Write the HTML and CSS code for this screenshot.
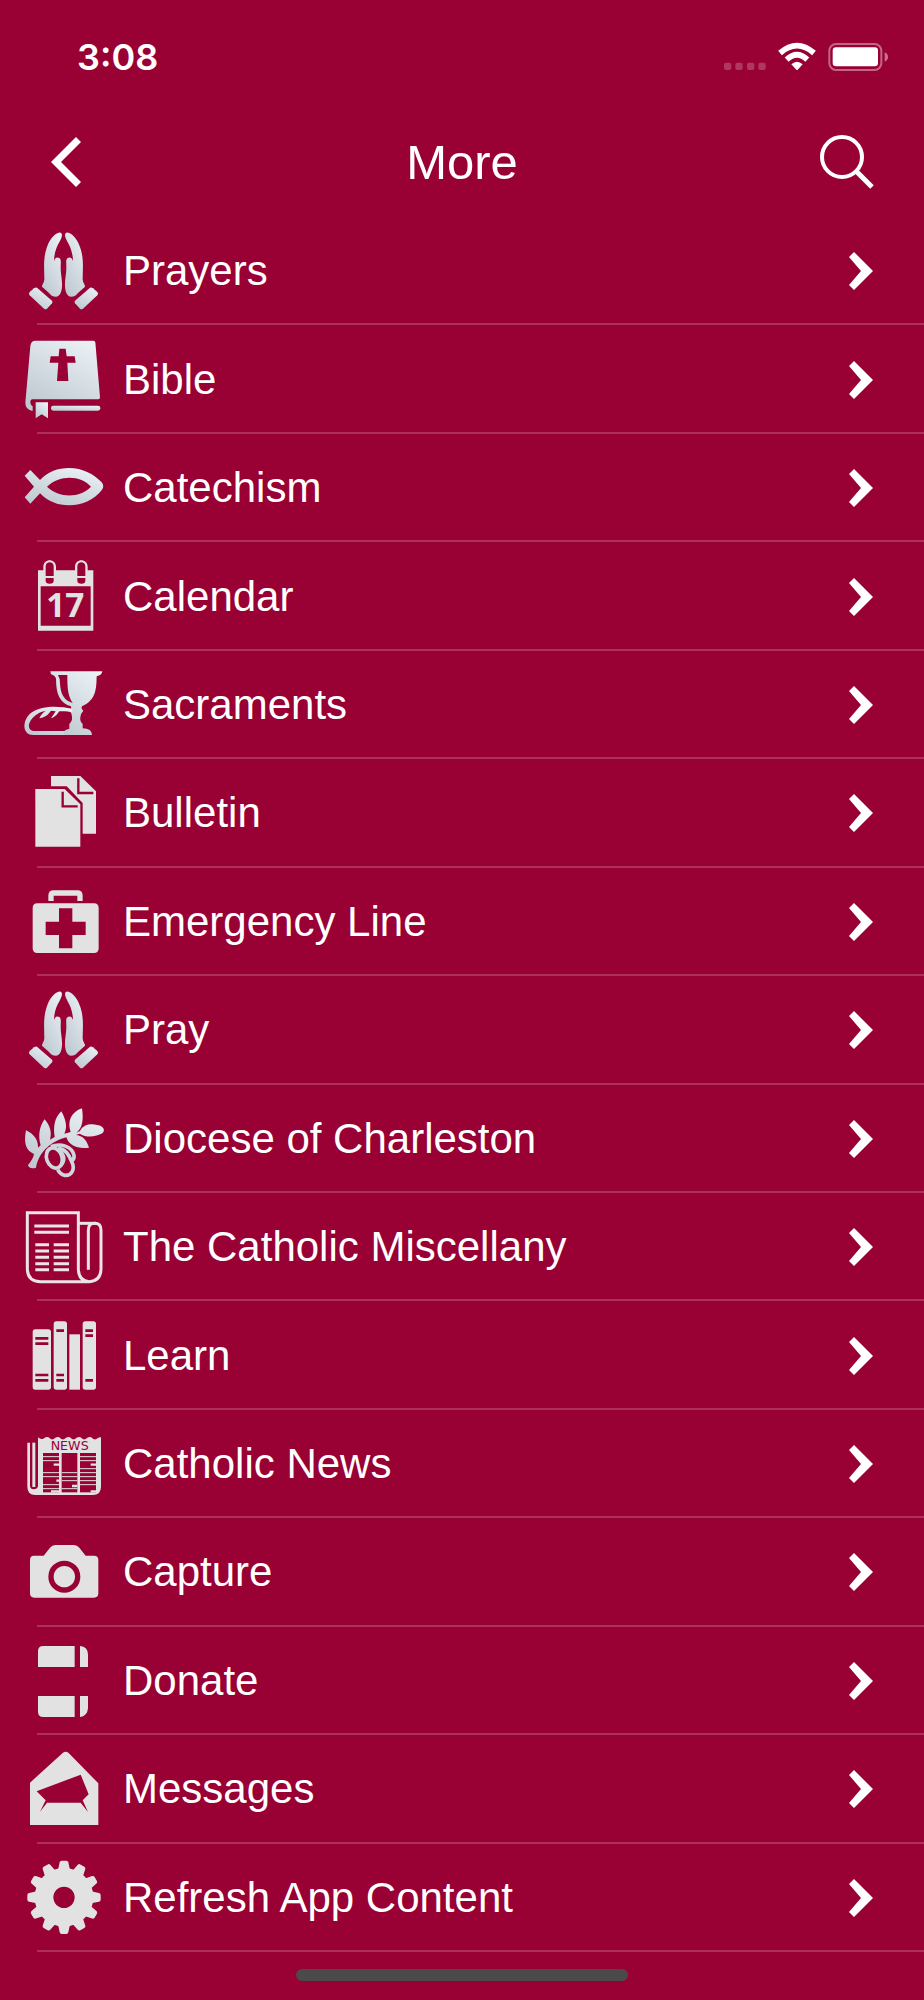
FILE: index.html
```html
<!DOCTYPE html>
<html lang="en">
<head>
    <meta charset="UTF-8">
    <meta name="viewport" content="width=device-width, initial-scale=1.0">
    <title>More</title>
    <link rel="stylesheet" href="styles.css">
</head>
<body>

    <!-- shared shapes -->
    <svg class="defs" aria-hidden="true">
        <defs>
            <linearGradient id="silver" x1="0.8" y1="0" x2="0.2" y2="1">
                <stop offset="0" stop-color="#e9f1f5"/>
                <stop offset="1" stop-color="#bfc8d0"/>
            </linearGradient>
            <symbol id="chevron" viewBox="0 0 26 38">
                <path d="M5 0L24 19L5 38L0 33L12 19L0 5Z" fill="#fff"/>
            </symbol>
            <symbol id="praying" viewBox="66 25 252 252">
                <g fill="url(#silver)">
                    <path d="M176 39C186 37 188 46 184 55C180 68 163 85 162 124C166 112 172 111 179 116C184 121 182 130 182 145C182 165 187 180 186 200C185 220 178 231 168 231C158 231 152 227 147 220L126 201C125 195 133 190 133 178C133 150 129 120 139 88C146 64 160 43 176 39Z"/>
                    <path d="M205 39C195 37 193 46 197 55C201 68 218 85 219 124C215 112 209 111 202 116C197 121 199 130 199 145C199 165 194 180 195 200C196 220 203 231 213 231C223 231 229 227 234 220L255 201C256 195 248 190 248 178C248 150 252 120 242 88C235 64 221 43 205 39Z"/>
                    <path d="M111 204L156 243Q159 247 156 251L141 267Q137 271 132 267L89 227Q84 222 89 217L102 206Q107 202 111 204Z"/>
                    <path d="M270 204L225 243Q222 247 225 251L240 267Q244 271 249 267L292 227Q297 222 292 217L279 206Q274 202 270 204Z"/>
                </g>
            </symbol>
            <path id="tooth" d="M174 390L179 366Q180 361 185 361H199Q204 361 205 366L210 390Z"/>
        </defs>
    </svg>

    <div class="status-bar">
        <span class="time">3:08</span>
        <svg class="indicators" viewBox="98 66 504 90" aria-hidden="true">
            <g fill="#fff" fill-opacity=".22">
                <rect x="101" y="128" width="22" height="22" rx="6"/>
                <rect x="135" y="128" width="22" height="22" rx="6"/>
                <rect x="170" y="128" width="22" height="22" rx="6"/>
                <rect x="204" y="128" width="22" height="22" rx="6"/>
            </g>
            <g fill="none" stroke="#fff" stroke-width="17">
                <path d="M269 99Q320 55 371 99"/>
                <path d="M289 119Q320 90 351 119"/>
            </g>
            <path d="M303 133Q320 118 337 133L322 149Q320 151 318 149Z" fill="#fff"/>
            <rect x="417" y="72" width="156" height="78" rx="20" fill="none" stroke="#fff" stroke-opacity=".4" stroke-width="6"/>
            <rect x="427" y="82" width="136" height="57" rx="10" fill="#fff"/>
            <path d="M583 97Q593 101 593 111T583 125Z" fill="#fff" fill-opacity=".45"/>
        </svg>
    </div>

    <header class="navbar">
        <button class="nav-btn" type="button" aria-label="Back">
            <svg class="back" viewBox="0 0 34 50"><path d="M28 0L33 5L13 25L33 45L28 50L3 25Z" fill="#fff"/></svg>
        </button>
        <h1>More</h1>
        <button class="nav-btn" type="button" aria-label="Search">
            <svg class="search" viewBox="0 0 56 56"><g fill="none" stroke="#fff"><circle cx="22" cy="23" r="20" stroke-width="4"/><path d="M36 37L52 53" stroke-width="5"/></g></svg>
        </button>
    </header>

    <nav class="menu">
        <a class="item" href="#prayers">
            <svg class="icon"><use href="#praying"/></svg>
            <span class="label">Prayers</span>
            <svg class="arrow"><use href="#chevron"/></svg>
        </a>
        <a class="item" href="#bible">
            <svg class="icon" viewBox="66 350 252 252">
                <g fill="url(#silver)">
                    <path fill-rule="evenodd" d="M106 361H281Q285 361 286 366L300 531Q300 537 295 537H98Q90 538 91 547Q92 555 98 558V572Q76 568 76 547L91 377Q93 361 106 361ZM178 385L176 408H152L149 427H175L171 482H205L202 427H227L224 408H200L197 385Z"/>
                    <path d="M107 546H144V594L125 582L107 594Z"/>
                    <rect x="153" y="556" width="148" height="15" rx="7"/>
                </g>
            </svg>
            <span class="label">Bible</span>
            <svg class="arrow"><use href="#chevron"/></svg>
        </a>
        <a class="item" href="#catechism">
            <svg class="icon" viewBox="66 675 252 252">
                <path fill="url(#silver)" fill-rule="evenodd" d="M91 750L120 780C145 755 173 744 207 744C248 744 283 763 305 787Q315 799 305 811C283 839 248 856 207 856C173 856 145 845 120 820L91 851L74 832L102 800L74 767ZM141 800C177 836 242 834 273 800C242 764 177 764 141 800Z"/>
            </svg>
            <span class="label">Catechism</span>
            <svg class="arrow"><use href="#chevron"/></svg>
        </a>
        <a class="item" href="#calendar">
            <svg class="icon" viewBox="66 41 252 252">
                <path fill="#e2e2e2" fill-rule="evenodd" d="M114 90H130V79C130 53 168 53 168 79V90H225V79C225 53 263 53 263 79V90H280V271H114ZM122 138V256H272V138ZM137 78V107H161V78C161 62 137 62 137 78ZM232 78V107H256V78C256 62 232 62 232 78ZM137 113V121Q137 130 149 130T161 121V113ZM232 113V121Q232 130 244 130T256 121V113Z"/>
                <text class="day" x="196" y="231" text-anchor="middle">17</text>
            </svg>
            <span class="label">Calendar</span>
            <svg class="arrow"><use href="#chevron"/></svg>
        </a>
        <a class="item" href="#sacraments">
            <svg class="icon" viewBox="66 366 252 252">
                <g fill="url(#silver)">
                    <path fill-rule="evenodd" d="M151 394H307Q306 406 290 409C289 445 289 480 246 499Q242 505 250 512Q242 520 241 532Q239 544 248 552V565Q276 566 276 585H188Q187 570 208 566V552Q220 540 215 525Q215 518 209 513Q216 506 213 499C181 489 168 466 168 416Q166 407 153 403ZM174 405Q180 414 180 430C182 463 192 482 218 489C203 468 202 440 202 405Z"/>
                    <path fill-rule="evenodd" d="M100 585C66 585 67 544 89 522C117 495 174 497 217 506V518C207 514 190 513 178 514C174 520 166 532 153 535C158 527 164 519 167 514L153 512C148 518 143 530 118 535C122 525 129 517 137 514C116 514 86 538 87 560Q88 572 103 573H192V585Z"/>
                </g>
            </svg>
            <span class="label">Sacraments</span>
            <svg class="arrow"><use href="#chevron"/></svg>
        </a>
        <a class="item" href="#bulletin">
            <svg class="icon" viewBox="66 691 252 252">
                <g fill="#e2e2e2">
                    <path d="M153 709H241L288 755V882H248V790L200 740H153Z"/>
                    <path d="M106 748H194L241 794V921H106Z"/>
                </g>
                <path d="M235 716V760H280M188 756V800H233" fill="none" stroke="#990033" stroke-width="7"/>
            </svg>
            <span class="label">Bulletin</span>
            <svg class="arrow"><use href="#chevron"/></svg>
        </a>
        <a class="item" href="#emergency">
            <svg class="icon" viewBox="66 56 252 252">
                <path fill="#e2e2e2" d="M145 122V106Q145 90 161 90H232Q248 90 248 106V122H232V106H161V122Z"/>
                <path fill="#e2e2e2" fill-rule="evenodd" d="M112 129H282Q296 129 296 143V264Q296 278 282 278H112Q98 278 98 264V143Q98 129 112 129ZM177 144V184H137V224H177V264H217V224H257V184H217V144Z"/>
            </svg>
            <span class="label">Emergency Line</span>
            <svg class="arrow"><use href="#chevron"/></svg>
        </a>
        <a class="item" href="#pray">
            <svg class="icon"><use href="#praying"/></svg>
            <span class="label">Pray</span>
            <svg class="arrow"><use href="#chevron"/></svg>
        </a>
        <a class="item" href="#diocese">
            <svg class="icon" viewBox="66 707 252 252">
                <g fill="url(#silver)">
                    <path d="M84 914Q99 897 102 881C72 868 73 838 78 810C101 820 115 839 114 862L122 855C113 824 119 797 134 777C151 796 156 818 150 838L164 830C159 798 164 772 184 753C199 780 202 802 193 820L212 815C201 782 214 755 246 744C251 779 248 803 229 817L240 812C252 787 285 789 306 799Q317 808 307 819C288 830 259 833 239 820L228 824C252 826 262 845 267 862C235 867 207 857 199 831C160 841 117 870 108 922Q95 927 86 919Z"/>
                </g>
                <g fill="none" stroke="#ced7de" stroke-width="11">
                    <ellipse cx="163" cy="893" rx="23" ry="31" transform="rotate(-20 163 893)"/>
                    <path d="M153 859C181 847 216 858 222 885Q224 899 211 904"/>
                    <path d="M174 863C197 867 206 882 215 904C228 929 212 947 195 945Q181 943 173 928"/>
                    <path d="M178 870C194 886 194 902 183 915"/>
                </g>
            </svg>
            <span class="label">Diocese of Charleston</span>
            <svg class="arrow"><use href="#chevron"/></svg>
        </a>
        <a class="item" href="#miscellany">
            <svg class="icon" viewBox="66 43 252 252">
                <g fill="none" stroke="#ebe4e7" stroke-width="9">
                    <path d="M268 276H122Q82 276 82 236V69H235V236Q235 274 268 276Q303 274 303 236V121Q303 101 284 101Q265 101 265 121V240"/>
                    <path d="M235 101H288"/>
                    <path d="M103 109H207M103 128H207M106 165H147M106 184H147M106 203H147M106 222H147M106 240H147M161 165H207M161 184H207M161 203H207M161 222H207M161 240H207"/>
                </g>
            </svg>
            <span class="label">The Catholic Miscellany</span>
            <svg class="arrow"><use href="#chevron"/></svg>
        </a>
        <a class="item" href="#learn">
            <svg class="icon" viewBox="66 368 252 252">
                <g fill="#e2e2e2">
                    <rect x="98" y="417" width="55" height="181" rx="8"/>
                    <rect x="161" y="393" width="40" height="205" rx="8"/>
                    <rect x="208" y="432" width="32" height="166"/>
                    <rect x="248" y="393" width="40" height="205" rx="8"/>
                </g>
                <path d="M106 444H145M106 460H145M106 554H145M106 570H145M169 421H192M169 554H192M169 570H192M256 421H279M256 436H279M256 570H279" stroke="#990033" stroke-width="8"/>
            </svg>
            <span class="label">Learn</span>
            <svg class="arrow"><use href="#chevron"/></svg>
        </a>
        <a class="item" href="#news">
            <svg class="icon" viewBox="66 693 252 252">
                <path fill="#e2e2e2" d="M114 742Q122 750 130 746Q138 738 146 742Q154 752 162 746Q170 738 178 742Q186 752 194 746Q202 738 210 742Q218 752 226 746Q234 738 242 742Q250 752 258 746Q266 738 274 742Q282 752 290 746Q297 740 303 742V890Q303 915 278 915H106Q82 915 82 890V758H90V888Q91 898 101 898Q112 898 114 888Z"/>
                <path fill="#e2e2e2" d="M97 758H106V891H97Z"/>
                <g fill="#990033">
                    <rect x="129" y="789" width="48" height="118"/>
                    <rect x="185" y="789" width="47" height="118"/>
                    <rect x="240" y="789" width="48" height="118"/>
                </g>
                <path d="M129 800H177M129 812H177M129 848H177M129 860H177M129 884H177M129 896H177M185 848H232M185 860H232M185 872H232M185 896H232M240 800H288M240 812H288M240 836H288M240 848H288M240 860H288M240 872H288M240 884H288" stroke="#e2e2e2" stroke-width="3"/>
                <path d="M161 824H177M169 872H177M216 888H232M272 824H288M153 904H177M272 904H288" stroke="#e2e2e2" stroke-width="7"/>
                <text class="masthead" x="209" y="781" text-anchor="middle">NEWS</text>
            </svg>
            <span class="label">Catholic News</span>
            <svg class="arrow"><use href="#chevron"/></svg>
        </a>
        <a class="item" href="#capture">
            <svg class="icon" viewBox="66 58 252 252">
                <path fill="#e2e2e2" d="M102 138H131L150 114Q156 106 166 106H222Q232 106 238 114L257 138H282Q295 138 295 151V251Q295 264 282 264H103Q90 264 90 251V151Q90 138 102 138Z"/>
                <circle cx="193" cy="201" r="40" fill="none" stroke="#990033" stroke-width="16"/>
            </svg>
            <span class="label">Capture</span>
            <svg class="arrow"><use href="#chevron"/></svg>
        </a>
        <a class="item" href="#donate">
            <svg class="icon" viewBox="66 384 252 252">
                <path fill="#e2e2e2" d="M114 471V424Q114 408 130 408H224V471ZM240 408Q264 410 264 434V471H240ZM114 558H224V621H130Q114 621 114 605ZM240 558H264V595Q262 619 240 621Z"/>
            </svg>
            <span class="label">Donate</span>
            <svg class="arrow"><use href="#chevron"/></svg>
        </a>
        <a class="item" href="#messages">
            <svg class="icon" viewBox="66 19 252 252">
                <path fill="#e2e2e2" fill-rule="evenodd" d="M90 129L188 40Q197 32 206 40L295 131V256H90ZM110 155L137 182L120 216L141 189H242L264 217L248 182L266 164L242 105Z"/>
            </svg>
            <span class="label">Messages</span>
            <svg class="arrow"><use href="#chevron"/></svg>
        </a>
        <a class="item" href="#refresh">
            <svg class="icon" viewBox="66 344 252 252">
                <circle cx="192" cy="471" r="60" fill="none" stroke="#e2e2e2" stroke-width="56"/>
                <g fill="#e2e2e2">
                    <use href="#tooth"/>
                    <use href="#tooth" transform="rotate(30 192 471)"/>
                    <use href="#tooth" transform="rotate(60 192 471)"/>
                    <use href="#tooth" transform="rotate(90 192 471)"/>
                    <use href="#tooth" transform="rotate(120 192 471)"/>
                    <use href="#tooth" transform="rotate(150 192 471)"/>
                    <use href="#tooth" transform="rotate(180 192 471)"/>
                    <use href="#tooth" transform="rotate(210 192 471)"/>
                    <use href="#tooth" transform="rotate(240 192 471)"/>
                    <use href="#tooth" transform="rotate(270 192 471)"/>
                    <use href="#tooth" transform="rotate(300 192 471)"/>
                    <use href="#tooth" transform="rotate(330 192 471)"/>
                </g>
            </svg>
            <span class="label">Refresh App Content</span>
            <svg class="arrow"><use href="#chevron"/></svg>
        </a>
    </nav>

    <footer class="home">
        <div class="home-bar"></div>
    </footer>

</body>
</html>
```

FILE: styles.css
```css
*{
    box-sizing: border-box;
}

body{
    margin: 0;
    min-height: 100vh;
    display: flex;
    flex-direction: column;
    font-family: "Liberation Sans", Arial, Helvetica, sans-serif;
    color: white;
    background-color: #990033;
}

svg{
    display: block;
    flex: none;
}

.defs{
    position: absolute;
    width: 0;
    height: 0;
}

.status-bar{
    height: 110px;
    padding: 4px 33px 0 77px;
    display: flex;
    align-items: center;
    justify-content: space-between;
}
.time{
    font-family: Inter, "Liberation Sans", sans-serif;
    font-size: 36px;
    font-weight: 600;
}
.indicators{
    width: 168px;
    height: 30px;
}

.navbar{
    height: 104px;
    margin-bottom: 3px;
    padding: 0 48px;
    display: flex;
    align-items: center;
    justify-content: space-between;
}
.navbar h1{
    margin: 0;
    font-size: 49px;
    font-weight: normal;
    line-height: 56px;
}
.nav-btn{
    width: 60px;
    padding: 0;
    border: 0;
    background: none;
    cursor: pointer;
}
.back{
    width: 34px;
    height: 50px;
}
.search{
    width: 56px;
    height: 56px;
    margin-left: auto;
}

.menu{
    flex: 1;
    display: grid;
    grid-auto-rows: 1fr;
}
.item{
    display: flex;
    align-items: center;
    padding: 10px 49px 12px 22px;
    color: white;
    text-decoration: none;
    /* separator starts indented from the left edge */
    background: linear-gradient(#ad305a, #ad305a) no-repeat 37px 100% / 100% 2px;
}
.icon{
    width: 84px;
    height: 84px;
}
.label,
.arrow{
    margin-top: 2px;
}
.label{
    flex: 1;
    padding-left: 17px;
    font-size: 42px;
    line-height: 48px;
}
.arrow{
    width: 26px;
    height: 38px;
}

.day{
    font: bold 100px "Open Sans", sans-serif;
    fill: #e2e2e2;
}
.masthead{
    font: 38px "DejaVu Sans", sans-serif;
    fill: #990033;
}

.home{
    padding: 17px 0 19px;
}
.home-bar{
    width: 36%;
    height: 12px;
    margin: 0 auto;
    border-radius: 6px;
    background-color: #4a4a4a;
}
```
